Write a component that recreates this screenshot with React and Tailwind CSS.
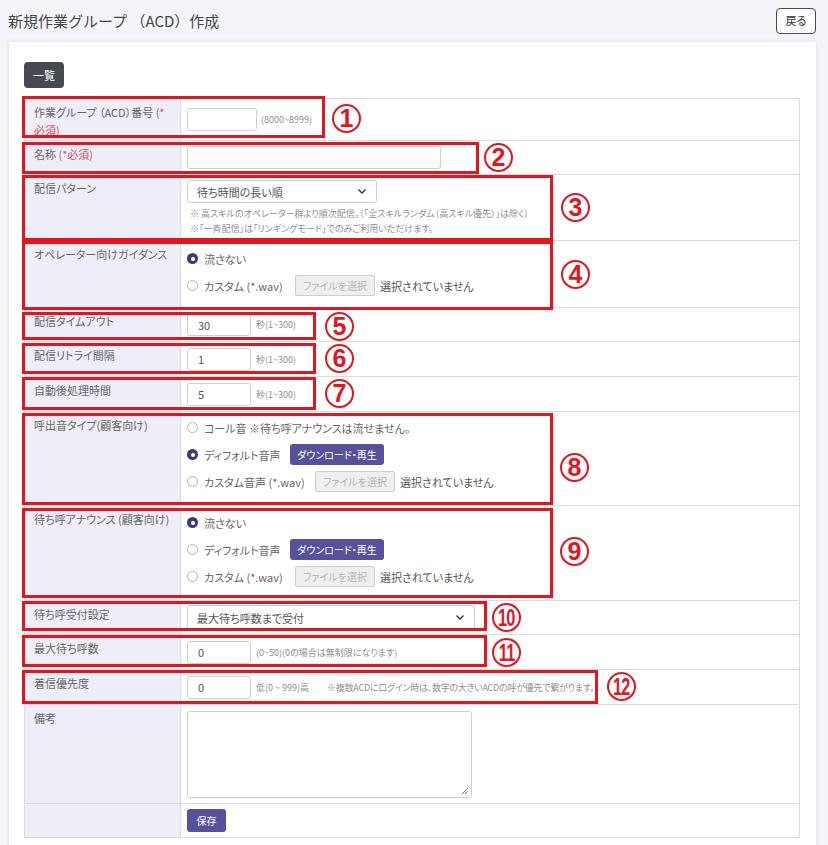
import React from 'react';

// 行ごとの高さ・中身
const FONT = { fontFamily: '"Noto Sans CJK JP", "Noto Sans", sans-serif', fontFeatureSettings: '"palt"' };

function Radio({ checked }) {
  return checked ? (
    <span className="w-[11px] h-[11px] rounded-full bg-[#3d3b72] flex items-center justify-center shrink-0">
      <span className="w-[4px] h-[4px] rounded-full bg-white" />
    </span>
  ) : (
    <span className="w-[11px] h-[11px] rounded-full border border-[#b5b5b5] bg-white shrink-0" />
  );
}

function FileButton() {
  return (
    <>
      <span className="w-[80px] h-[21px] border border-[#cfcfcf] bg-[#efefef] rounded-[2px] text-[10px] text-[#b5b5b5] flex items-center justify-center shrink-0">
        ファイルを選択
      </span>
      <span className="ml-[5px] text-[11px] text-[#555]">選択されていません</span>
    </>
  );
}

function PlayButton() {
  return (
    <span className="w-[94px] h-[21px] rounded-[3px] bg-[#57519b] text-white text-[10px] flex items-center justify-center shrink-0">
      ダウンロード・再生
    </span>
  );
}

function Option({ checked, children }) {
  return (
    <div className="h-[27px] flex items-center">
      <Radio checked={checked} />
      <div className="ml-[6px] flex items-center text-[11px] text-[#666]">{children}</div>
    </div>
  );
}

function TextInput({ value = '', w = 'w-[64px]' }) {
  return (
    <span className={`${w} h-[23px] border border-[#cfcfcf] rounded-[3px] bg-white flex items-center px-[10px] text-[11px] text-[#555] shrink-0`}>
      {value}
    </span>
  );
}

function Select({ text, w, h = 'h-[23px]' }) {
  return (
    <span className={`${w} ${h} border border-[#cfcfcf] rounded-[3px] bg-white flex items-center justify-between pl-[9px] pr-[9px] text-[11px] text-[#555]`}>
      <span>{text}</span>
      <svg width="10" height="7" viewBox="0 0 10 7" fill="none">
        <path d="M1.5 1.5 L5 5 L8.5 1.5" stroke="#333" strokeWidth="1.4" />
      </svg>
    </span>
  );
}

function Hint({ children, className = '' }) {
  return <span className={`text-[9px] text-[#909090] ${className}`}>{children}</span>;
}

function Row({ h, label, children, top = false, padTop = '' }) {
  return (
    <div className={`flex border-b border-[#dcdcdc] ${h}`}>
      <div className="w-[156px] shrink-0 bg-[#eeeef8] border-r border-[#dcdcdc] px-[9px] pt-[4px] text-[11px] leading-[18px] text-[#666]">
        {label}
      </div>
      <div className={`flex-1 flex ${top ? 'flex-col justify-start' : 'items-center'} px-[6px] ${padTop}`}>
        {children}
      </div>
    </div>
  );
}

const Req = () => <span className="text-[#d0505a]">(*必須)</span>;

// 赤枠 (l,t,w,h) と丸数字の位置 (cx = 左端, cy = 中心)
const marks = [
  { n: '1', l: 22, t: 96, w: 303, h: 42, cx: 332, cy: 118 },
  { n: '2', l: 22, t: 142, w: 457, h: 32, cx: 484, cy: 157 },
  { n: '3', l: 22, t: 175, w: 531, h: 66, cx: 561, cy: 207 },
  { n: '4', l: 22, t: 241, w: 531, h: 69, cx: 561, cy: 274 },
  { n: '5', l: 22, t: 312, w: 294, h: 28, cx: 325, cy: 326 },
  { n: '6', l: 22, t: 343, w: 294, h: 31, cx: 325, cy: 358 },
  { n: '7', l: 22, t: 377, w: 294, h: 33, cx: 325, cy: 393 },
  { n: '8', l: 22, t: 413, w: 531, h: 92, cx: 560, cy: 467 },
  { n: '9', l: 22, t: 508, w: 531, h: 90, cx: 560, cy: 551 },
  { n: '10', l: 22, t: 601, w: 465, h: 30, cx: 492, cy: 617 },
  { n: '11', l: 22, t: 635, w: 465, h: 32, cx: 492, cy: 652 },
  { n: '12', l: 22, t: 670, w: 576, h: 34, cx: 607, cy: 686 },
];

export default function App() {
  return (
    <div className="relative w-[828px] h-[845px] overflow-hidden bg-[#f4f4fb]" style={FONT}>
      {/* ヘッダー */}
      <div className="flex items-center justify-between pl-[8px] pr-[12px] h-[42px]">
        <h1 className="text-[15px] text-[#444] font-normal [font-feature-settings:normal]">新規作業グループ （ACD）作成</h1>
        <button className="w-[40px] h-[26px] border border-[#4a4a4a] rounded-[4px] bg-white text-[11px] text-[#333] -mt-[1px]">
          戻る
        </button>
      </div>

      {/* カード */}
      <div className="ml-[9px] w-[807px] bg-white shadow-[0_0_4px_rgba(0,0,0,0.12)] pt-[19px] px-[15px] pb-[20px]">
        <button className="w-[40px] h-[26px] rounded-[4px] bg-[#464a50] text-white text-[11px]">一覧</button>

        <div className="mt-[10px] w-[776px] border-t border-l border-r border-[#dcdcdc]">
          <Row h="h-[42px]" label={<>作業グループ （ACD）番号 <span className="text-[#d0505a]">(*</span><br /><span className="text-[#d0505a]">必須)</span></>}>
            <TextInput w="w-[70px]" />
            <Hint className="ml-[4px]">(8000~8999)</Hint>
          </Row>
          <Row h="h-[34px]" label={<>名称 <Req /></>}>
            <TextInput w="w-[254px]" />
          </Row>
          <Row h="h-[66px]" label="配信パターン" top padTop="pt-[5px]">
            <Select text="待ち時間の長い順" w="w-[190px]" />
            <Hint className="mt-[3px] ml-[3px] leading-[15px]">※ 高スキルのオペレーター群より順次配信。（「全スキルランダム（高スキル優先）」は除く）</Hint>
            <Hint className="ml-[3px] leading-[15px]">※「一斉配信」は「リンギングモード」でのみご利用いただけます。</Hint>
          </Row>
          <Row h="h-[67px]" label="オペレーター向けガイダンス" top padTop="pt-[4px]">
            <Option checked>流さない</Option>
            <Option>
              <span className="w-[91px]">カスタム (*.wav)</span>
              <FileButton />
            </Option>
          </Row>
          <Row h="h-[34px]" label="配信タイムアウト">
            <TextInput value="30" />
            <Hint className="ml-[5px]">秒(1~300)</Hint>
          </Row>
          <Row h="h-[35px]" label="配信リトライ間隔">
            <TextInput value="1" />
            <Hint className="ml-[5px]">秒(1~300)</Hint>
          </Row>
          <Row h="h-[35px]" label="自動後処理時間">
            <TextInput value="5" />
            <Hint className="ml-[5px]">秒(1~300)</Hint>
          </Row>
          <Row h="h-[94px]" label="呼出音タイプ(顧客向け)" top padTop="pt-[2px]">
            <Option>コール音 ※待ち呼アナウンスは流せません。</Option>
            <Option checked>
              <span className="w-[86px]">ディフォルト音声</span>
              <PlayButton />
            </Option>
            <Option>
              <span className="w-[111px]">カスタム音声 (*.wav)</span>
              <FileButton />
            </Option>
          </Row>
          <Row h="h-[95px]" label="待ち呼アナウンス (顧客向け)" top padTop="pt-[3px]">
            <Option checked>流さない</Option>
            <Option>
              <span className="w-[86px]">ディフォルト音声</span>
              <PlayButton />
            </Option>
            <Option>
              <span className="w-[91px]">カスタム (*.wav)</span>
              <FileButton />
            </Option>
          </Row>
          <Row h="h-[34px]" label="待ち呼受付設定">
            <Select text="最大待ち呼数まで受付" w="w-[288px]" h="h-[26px]" />
          </Row>
          <Row h="h-[35px]" label="最大待ち呼数">
            <TextInput value="0" />
            <Hint className="ml-[5px]">(0~50)(0の場合は無制限になります)</Hint>
          </Row>
          <Row h="h-[35px]" label="着信優先度">
            <TextInput value="0" />
            <Hint className="ml-[5px]">低(0 ~ 999)高</Hint>
            <Hint className="ml-[18px] tracking-[-0.25px]">※複数ACDにログイン時は、数字の大きいACDの呼が優先で繋がります。</Hint>
          </Row>
          <Row h="h-[99px]" label="備考">
            <span className="relative w-[285px] h-[87px] border border-[#cfcfcf] rounded-[3px] bg-white">
              <svg className="absolute right-[2px] bottom-[2px]" width="8" height="8" viewBox="0 0 8 8">
                <path d="M7 1 L1 7 M7 4 L4 7" stroke="#777" strokeWidth="1" />
              </svg>
            </span>
          </Row>
          <Row h="h-[34px]" label="">
            <button className="w-[39px] h-[23px] rounded-[3px] bg-[#57519b] text-white text-[10px]">保存</button>
          </Row>
        </div>
      </div>

      {/* 注釈の赤枠と丸数字 */}
      {marks.map((m) => (
        <React.Fragment key={m.n}>
          <div
            className="absolute border-[3px] border-[#e3161f]"
            style={{ left: m.l, top: m.t, width: m.w, height: m.h }}
          />
          <div
            className="absolute w-[29px] h-[29px] rounded-full border-2 border-[#e3161f] flex items-center justify-center"
            style={{ left: m.cx, top: m.cy - 14 }}
          >
            {m.n.length === 1 ? (
              <span className="text-[25px] leading-none font-bold text-[#e3161f] [font-family:'Liberation_Sans',sans-serif]">{m.n}</span>
            ) : (
              <span className="inline-block scale-x-[0.68] text-[24px] leading-none font-bold tracking-[-1px] text-[#e3161f] [font-family:'Liberation_Sans',sans-serif]">{m.n}</span>
            )}
          </div>
        </React.Fragment>
      ))}
    </div>
  );
}
